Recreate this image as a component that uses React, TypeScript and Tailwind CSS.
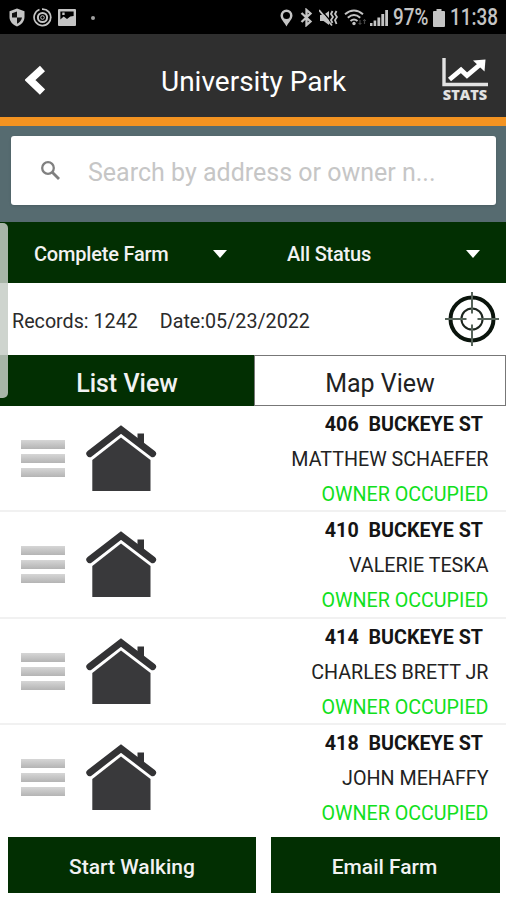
import { useState } from "react";

const properties = [
  { address: "406  BUCKEYE ST", owner: "MATTHEW SCHAEFER", status: "OWNER OCCUPIED" },
  { address: "410  BUCKEYE ST", owner: "VALERIE TESKA", status: "OWNER OCCUPIED" },
  { address: "414  BUCKEYE ST", owner: "CHARLES BRETT JR", status: "OWNER OCCUPIED" },
  { address: "418  BUCKEYE ST", owner: "JOHN MEHAFFY", status: "OWNER OCCUPIED" },
];

const StatusBar = () => (
  <div className="flex h-[34px] items-center bg-black pt-px pl-[9px] text-[#c4c4c4]">
    <svg width="16" height="19" viewBox="0 0 16 19">
      <path d="M8 0.5 15.5 3.3V9C15.5 13.5 12 17 8 18.5 4 17 .5 13.5.5 9V3.3Z" fill="currentColor" />
      <path d="M8 3.5V9.5H3V5.200ZM8 9.5H13C12.6 12.3 10.5 14.6 8 15.8Z" fill="#111" />
    </svg>
    <svg className="ml-[8px]" width="19" height="19" viewBox="0 0 19 19" fill="none" stroke="currentColor">
      <path d="M6.500 1.500A8.300 8.300 0 1 0 13 1.800M9 1.200A8.300 8.300 0 0 1 17.800 10" strokeWidth="1.700" />
      <circle cx="9.5" cy="9.5" r="4.600" strokeWidth="2" />
      <circle cx="9.5" cy="9.5" r="1.800" strokeWidth="1" />
    </svg>
    <svg className="ml-[6px]" width="18" height="17" viewBox="0 0 19 17" preserveAspectRatio="none">
      <path
        fillRule="evenodd"
        fill="currentColor"
        d="M1 0H18Q19 0 19 1V16Q19 17 18 17H1Q0 17 0 16V1Q0 0 1 0ZM2.500 2.500V10.500L6 7.500 9.500 10 13 7.500 16.500 7V2.500ZM4.500 3.500H7V6H4.500Z"
      />
    </svg>
    <span className="ml-[15px] size-[4px] rounded-full bg-[#a0a0a0]" />
    <div className="ml-auto flex items-center pr-[9px]">
      <svg width="13" height="18" viewBox="0 0 13 18">
        <path
          fillRule="evenodd"
          fill="currentColor"
          d="M6.500 0.500A6 6 0 0 1 12.500 6.500C12.500 10 8.500 13.500 6.500 17.500 4.500 13.500.5 10 .5 6.500A6 6 0 0 1 6.500.5ZM6.500 3A3.500 3.500 0 1 0 6.500 10 3.500 3.500 0 1 0 6.500 3Z"
        />
      </svg>
      <svg className="ml-[7px]" width="13" height="19" viewBox="0 0 13 19" fill="none" stroke="currentColor" strokeWidth="2.300">
        <path d="M1.500 5 10.500 13.500 6.500 17V2L10.500 5.500 1.500 14" />
      </svg>
      <svg className="ml-[6px]" width="19" height="18" viewBox="0 0 19 18">
        <path d="M1 6H4.500L10 2V16L4.500 12H1Z" fill="currentColor" />
        <path d="M2.500 1.500 15 16" stroke="#000" strokeWidth="1.200" />
        <path
          d="M0 1 13 16.500M13.500 2 12 5 14 8 12 11 13.500 14M17.500 2 16 5 18 8 16 11 17.500 15"
          fill="none"
          stroke="currentColor"
          strokeWidth="1.800"
        />
      </svg>
      <svg className="ml-[6px]" width="23" height="17" viewBox="0 0 23 17" fill="none" stroke="currentColor" strokeWidth="2">
        <path d="M1 5.200Q10 -2.200 19 5.200M3.800 8.700Q10 3.300 16.200 8.700M6.500 12Q10 9 13.500 12" />
        <circle cx="10" cy="14.500" r="1.700" fill="currentColor" stroke="none" />
        <path d="M16 11V16M14.500 14.500H17.500M20.500 10V15M19 11.500H22" stroke="#444" strokeWidth="1.200" />
      </svg>
      <svg className="ml-[3px]" width="18" height="17" viewBox="0 0 18 17" fill="currentColor">
        <path d="M0 14H2.500V17H0ZM3.600 11.500H6.200V17H3.600ZM7.400 8.500H10.200V17H7.400ZM11.300 5H14.200V17H11.300ZM15.200 1H18V17H15.200Z" />
      </svg>
      <div className="ml-[5px] w-[35px] pt-[2px]">
        <span className="inline-block origin-left scale-x-[0.82] text-[23px] leading-[24px] font-medium whitespace-nowrap">
          97%
        </span>
      </div>
      <svg className="ml-[5px]" width="12" height="18" viewBox="0 0 12 18">
        <path d="M3.500 0H8.500V2H11Q12 2 12 3V17Q12 18 11 18H1Q0 18 0 17V3Q0 2 1 2H3.500Z" fill="currentColor" />
      </svg>
      <div className="ml-[5px] w-[47px] pt-[2px]">
        <span className="inline-block origin-left scale-x-[0.82] text-[23px] leading-[24px] font-medium whitespace-nowrap">
          11:38
        </span>
      </div>
    </div>
  </div>
);

const StatsIcon = () => (
  <svg width="46" height="30" viewBox="0 0 46 30" fill="none">
    <path d="M2 0V26.500H46" stroke="#e2e2e2" strokeWidth="3.400" />
    <path d="M7.500 21.500 19 12 25 17.500 37.500 7" stroke="#fff" strokeWidth="4.800" />
    <path d="M31 2.500 43.500 1.500 42.500 13.500Z" fill="#fff" />
  </svg>
);

const TargetIcon = () => (
  <svg width="54" height="54" viewBox="0 0 54 54" fill="none">
    <circle cx="27" cy="27" r="21.500" stroke="#0a140c" strokeWidth="4" />
    <circle cx="27" cy="27" r="10.600" stroke="#1c251e" strokeWidth="2" />
    <path d="M27 0V21.500M27 32.500V54M0 27H21.500M32.500 27H54" stroke="#56645a" strokeWidth="2" />
  </svg>
);

const HouseIcon = () => (
  <svg width="72" height="68" viewBox="0 0 72 68">
    <path d="M51.500 8.500H58V23L51.500 18Z" fill="#333335" />
    <path d="M3.700 28.700 35 4.500 66.700 28.700" fill="none" stroke="#333335" strokeWidth="6.800" strokeLinecap="round" />
    <path d="M35 12.500 64.500 35V66H6.300V35Z" fill="#39393b" />
  </svg>
);

const Caret = () => (
  <svg width="14" height="8" viewBox="0 0 14 8">
    <path d="M0 0H14L7 8Z" fill="#fff" />
  </svg>
);

const DragHandle = () => (
  <div className="flex w-[44px] flex-col gap-[5px]">
    <div className="h-[9px] bg-linear-to-b from-[#d6d6d6] to-[#b4b4b4]" />
    <div className="h-[9px] bg-linear-to-b from-[#d6d6d6] to-[#b4b4b4]" />
    <div className="h-[9px] bg-linear-to-b from-[#d6d6d6] to-[#b4b4b4]" />
  </div>
);

export default function App() {
  const [view, setView] = useState("list");

  return (
    <div className="relative flex h-[900px] w-[506px] flex-col overflow-hidden bg-white font-['Roboto',sans-serif]">
      <StatusBar />
      <header className="flex h-[92px] items-center border-b-[9px] border-[#f39321] bg-[#2f2f2f] text-white">
        <svg className="mt-[9px] ml-[25px]" width="20" height="30" viewBox="0 0 20 30" fill="none">
          <path d="M17.500 3.500 5 15 17.500 27" stroke="#fff" strokeWidth="7.500" />
        </svg>
        <h1 className="ml-[116px] pt-[12px] text-[28px] leading-[32px] whitespace-nowrap">University Park</h1>
        <div className="mt-[8px] mr-[18px] ml-auto flex flex-col items-center">
          <StatsIcon />
          <span className="font-['Open_Sans'] text-[14.500px] leading-[13px] font-extrabold text-[#e2e2e2]">STATS</span>
        </div>
      </header>

      <div className="h-[96px] bg-[#566b70] px-[11px] pt-[10px]">
        <div className="flex h-[69px] w-[485px] items-center rounded-[3px] bg-white pl-[29px] shadow-sm">
          <svg width="21" height="21" viewBox="0 0 21 21" fill="none" stroke="#808080">
            <circle cx="8" cy="8" r="5.800" strokeWidth="2.300" />
            <path d="M12 12 19 19" strokeWidth="2.800" />
          </svg>
          <span className="ml-[27px] pt-[5px] text-[25px] leading-[30px] whitespace-nowrap text-[#c6c6c6]">
            Search by address or owner n...
          </span>
        </div>
      </div>

      <div className="flex h-[61px] items-center bg-[#022f02] pt-[3px] text-[20px] font-medium tracking-[-0.200px] text-[#f2f2f2]">
        <div className="flex w-[253px] items-center justify-between pr-[26px] pl-[34px]">
          Complete Farm
          <Caret />
        </div>
        <div className="flex w-[253px] items-center justify-between pr-[26px] pl-[34px]">
          All Status
          <Caret />
        </div>
      </div>

      <div className="flex h-[72px] items-center pr-[7px] pl-[12px] text-[19.700px] text-[#2b2b2b]">
        <span className="pt-[5px]">Records: 1242</span>
        <span className="ml-[22px] pt-[5px]">Date:05/23/2022</span>
        <span className="ml-auto">
          <TargetIcon />
        </span>
      </div>

      <div className="flex h-[51px] text-[25px]">
        <button
          className="w-[254px] bg-[#022f02] pt-[6px] font-medium text-[#f2f2f2]"
          onClick={() => setView("list")}
          aria-pressed={view === "list"}
        >
          List View
        </button>
        <button
          className="flex-1 border border-[#777] bg-white pt-[6px] text-[#222]"
          onClick={() => setView("map")}
          aria-pressed={view === "map"}
        >
          Map View
        </button>
      </div>

      <ul>
        {properties.map((property) => (
          <li key={property.address} className="flex h-[106.300px] border-b-2 border-[#f1f1f1] pr-[17.500px] pl-[21px]">
            <div className="pt-[34px]">
              <DragHandle />
            </div>
            <div className="pt-[19px] pl-[21px]">
              <HouseIcon />
            </div>
            <div className="ml-auto flex flex-col items-end pt-[1px] text-[19.700px] leading-[35px] whitespace-pre">
              <span className="pr-[5.500px] font-bold text-[#151515]">{property.address}</span>
              <span className="text-[#222]">{property.owner}</span>
              <span className="text-[#10e020]">{property.status}</span>
            </div>
          </li>
        ))}
      </ul>

      <div className="-mt-[3.200px] flex flex-1 gap-[15px] bg-white pt-[9px] pl-[8px] text-[21px] font-medium text-[#f2f2f2]">
        <button className="h-[56px] w-[248px] bg-[#022f02] pt-[5px]">Start Walking</button>
        <button className="h-[56px] w-[229px] bg-[#022f02] pt-[5px] pr-[2px]">Email Farm</button>
      </div>

      {/* scroll indicator, lies over the filter bar and tabs */}
      <div className="absolute top-[223px] left-0 h-[175px] w-[8px] rounded-r-[5px] bg-[#c6cdc6]/85" />
    </div>
  );
}
